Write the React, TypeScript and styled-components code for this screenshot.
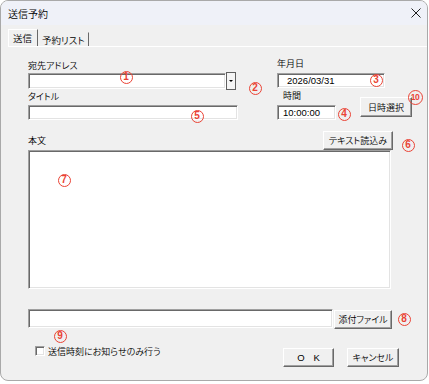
import styled, { createGlobalStyle } from 'styled-components';

const GlobalStyle = createGlobalStyle`
  html, body {
    margin: 0;
    background: #ffffff;
  }
  body {
    font-family: "Noto Sans CJK JP", "Noto Sans", sans-serif;
  }
`;

const jp = `"Noto Sans CJK JP", "Noto Sans", sans-serif`;
const latin = `"Liberation Sans", Arial, sans-serif`;
const mark = '#ea4335';

const sunken = `
  box-sizing: border-box;
  background: #ffffff;
  border-style: solid;
  border-width: 1px;
  border-color: #a0a0a0 #ffffff #ffffff #a0a0a0;
  box-shadow: inset 1px 1px 0 #696969, inset -1px -1px 0 #e3e3e3;
`;

const Styled = {
  Window: styled.div`
    position: relative;
    box-sizing: border-box;
    width: 428px;
    height: 381px;
    border: 1px solid #a9a9a9;
    border-radius: 8px;
    background: #f0f0f0;
    overflow: hidden;
    font-family: ${jp};
    font-size: 9px;
    font-weight: 350;
    font-feature-settings: "palt";
    color: #000000;
  `,
  TitleBar: styled.div`
    display: flex;
    align-items: center;
    justify-content: space-between;
    height: 24px;
    padding: 0 6px 0 7px;
    background: #eff1f8;
    font-size: 10px;
  `,
  TabStrip: styled.div`
    display: flex;
    align-items: flex-end;
    height: 17px;
    margin-top: 4px;
    padding-left: 7px;
  `,
  Tab: styled.div<{ $active?: boolean }>`
    box-sizing: border-box;
    display: flex;
    align-items: center;
    height: ${(p) => (p.$active ? 17 : 14)}px;
    padding: ${(p) => (p.$active ? '0 5px 0 4px' : '0 3px 0 3px')};
    border-top: 1px solid ${(p) => (p.$active ? '#ffffff' : 'transparent')};
    border-left: 1px solid ${(p) => (p.$active ? '#ffffff' : 'transparent')};
    border-right: 1px solid #696969;
    font-size: 9.5px;
    white-space: nowrap;
  `,
  Panel: styled.div`
    margin-left: 7px;
    padding: 13px 0 0 20px;
    border-top: 1px solid #ffffff;
  `,
  TopSection: styled.div`
    display: flex;
    align-items: flex-start;
  `,
  Column: styled.div<{ $width?: number; $left?: number; $top?: number }>`
    display: flex;
    flex-direction: column;
    width: ${(p) => (p.$width ? `${p.$width}px` : 'auto')};
    margin-left: ${(p) => p.$left ?? 0}px;
    margin-top: ${(p) => p.$top ?? 0}px;
  `,
  Label: styled.div<{ $top?: number; $bottom?: number; $indent?: number }>`
    height: 12px;
    line-height: 12px;
    margin-top: ${(p) => p.$top ?? 0}px;
    margin-bottom: ${(p) => p.$bottom ?? 0}px;
    padding-left: ${(p) => p.$indent ?? 0}px;
    white-space: nowrap;
  `,
  ComboRow: styled.div`
    display: flex;
    align-items: center;
    height: 18px;
  `,
  Field: styled.div<{ $w: number; $h: number; $top?: number; $pad?: number }>`
    ${sunken}
    width: ${(p) => p.$w}px;
    height: ${(p) => p.$h}px;
    margin-top: ${(p) => p.$top ?? 0}px;
    padding-left: ${(p) => p.$pad ?? 0}px;
    font-family: ${latin};
    font-weight: 400;
    font-size: 9.5px;
    line-height: 13px;
  `,
  DropButton: styled.div`
    box-sizing: border-box;
    display: flex;
    align-items: center;
    justify-content: center;
    width: 10px;
    height: 18px;
    border: 1px solid #5f5f5f;
    background: #f4f4f4;
    &::after {
      content: '';
      border-left: 2px solid transparent;
      border-right: 2px solid transparent;
      border-top: 2px solid #000000;
    }
  `,
  TimeRow: styled.div`
    display: flex;
    align-items: flex-end;
  `,
  Button: styled.div<{ $w: number; $h: number; $top?: number; $left?: number; $bottom?: number }>`
    box-sizing: border-box;
    display: flex;
    align-items: center;
    justify-content: center;
    width: ${(p) => p.$w}px;
    height: ${(p) => p.$h}px;
    margin: ${(p) => p.$top ?? 0}px 0 ${(p) => p.$bottom ?? 0}px ${(p) => p.$left ?? 0}px;
    background: #f0f0f0;
    border-style: solid;
    border-width: 1px;
    border-color: #ffffff #696969 #696969 #ffffff;
    box-shadow: inset -1px -1px 0 #a0a0a0;
    white-space: nowrap;
    flex-shrink: 0;
  `,
  BodyHeader: styled.div`
    display: flex;
    align-items: flex-end;
    justify-content: space-between;
    width: 365px;
    margin-top: 11px;
  `,
  AttachRow: styled.div`
    display: flex;
    align-items: flex-start;
    margin-top: 20px;
  `,
  BottomRow: styled.div`
    display: flex;
    align-items: flex-start;
    width: 371px;
    margin-top: 17px;
  `,
  CheckGroup: styled.label`
    display: flex;
    align-items: center;
    gap: 3px;
    padding-left: 7px;
    height: 10px;
    white-space: nowrap;
  `,
  CheckBox: styled.span`
    ${sunken}
    display: block;
    width: 10px;
    height: 10px;
  `,
  ButtonGroup: styled.div`
    display: flex;
    gap: 13px;
    margin-left: auto;
    margin-top: 2px;
  `,
  OkText: styled.span`
    display: flex;
    gap: 9px;
    font-family: ${latin};
    font-weight: 400;
    font-size: 9.5px;
  `,
  Badge: styled.span<{ $x: number; $y: number; $size?: number }>`
    position: absolute;
    box-sizing: border-box;
    display: flex;
    align-items: center;
    justify-content: center;
    left: ${(p) => p.$x - (p.$size ?? 13) / 2 - 1}px;
    top: ${(p) => p.$y - (p.$size ?? 13) / 2 - 1}px;
    width: ${(p) => p.$size ?? 13}px;
    height: ${(p) => p.$size ?? 13}px;
    border: 1.2px solid ${mark};
    border-radius: 50%;
    color: ${mark};
    font-family: ${latin};
    font-weight: 700;
    font-size: ${(p) => ((p.$size ?? 13) > 13 ? 8.5 : 10)}px;
    letter-spacing: ${(p) => ((p.$size ?? 13) > 13 ? '-0.6px' : '0')};
    line-height: 1;
  `,
};

const badges: { n: number; x: number; y: number; size?: number }[] = [
  { n: 1, x: 126, y: 77 },
  { n: 2, x: 255, y: 88 },
  { n: 3, x: 376, y: 80 },
  { n: 4, x: 344, y: 114 },
  { n: 5, x: 197, y: 116 },
  { n: 6, x: 408, y: 145 },
  { n: 7, x: 64, y: 180 },
  { n: 8, x: 404, y: 319 },
  { n: 9, x: 60, y: 336 },
  { n: 10, x: 415, y: 97, size: 15 },
];

function CloseIcon() {
  return (
    <svg width="10" height="10" viewBox="0 0 10 10">
      <path d="M0.5 0.5 L9.5 9.5 M9.5 0.5 L0.5 9.5" stroke="#1f1f1f" strokeWidth="1" fill="none" />
    </svg>
  );
}

export default function App() {
  return (
    <>
      <GlobalStyle />
      <Styled.Window>
        <Styled.TitleBar>
          <span>送信予約</span>
          <CloseIcon />
        </Styled.TitleBar>

        <Styled.TabStrip>
          <Styled.Tab $active>送信</Styled.Tab>
          <Styled.Tab>予約リスト</Styled.Tab>
        </Styled.TabStrip>

        <Styled.Panel>
          <Styled.TopSection>
            <Styled.Column $width={210}>
              <Styled.Label>宛先アドレス</Styled.Label>
              <Styled.ComboRow>
                <Styled.Field $w={198} $h={16} />
                <Styled.DropButton />
              </Styled.ComboRow>
              <Styled.Label $top={1}>タイトル</Styled.Label>
              <Styled.Field $w={210} $h={15} $top={2} />
            </Styled.Column>

            <Styled.Column $left={39} $top={-2}>
              <Styled.Label>年月日</Styled.Label>
              <Styled.Field $w={108} $h={15} $top={3} $pad={9}>
                2026/03/31
              </Styled.Field>
              <Styled.TimeRow>
                <Styled.Column>
                  <Styled.Label $top={2} $indent={6}>
                    時間
                  </Styled.Label>
                  <Styled.Field $w={59} $h={15} $top={3} $pad={5}>
                    10:00:00
                  </Styled.Field>
                </Styled.Column>
                <Styled.Button $w={52} $h={20} $left={24} $bottom={3}>
                  日時選択
                </Styled.Button>
              </Styled.TimeRow>
            </Styled.Column>
          </Styled.TopSection>

          <Styled.BodyHeader>
            <Styled.Label $bottom={3}>本文</Styled.Label>
            <Styled.Button $w={70} $h={19}>
              テキスト読込み
            </Styled.Button>
          </Styled.BodyHeader>
          <Styled.Field $w={363} $h={139} />

          <Styled.AttachRow>
            <Styled.Field $w={305} $h={19} />
            <Styled.Button $w={58} $h={19} $top={1} $left={1}>
              添付ファイル
            </Styled.Button>
          </Styled.AttachRow>

          <Styled.BottomRow>
            <Styled.CheckGroup>
              <Styled.CheckBox />
              送信時刻にお知らせのみ行う
            </Styled.CheckGroup>
            <Styled.ButtonGroup>
              <Styled.Button $w={51} $h={19}>
                <Styled.OkText>
                  <span>O</span>
                  <span>K</span>
                </Styled.OkText>
              </Styled.Button>
              <Styled.Button $w={52} $h={19}>
                キャンセル
              </Styled.Button>
            </Styled.ButtonGroup>
          </Styled.BottomRow>
        </Styled.Panel>

        {badges.map((b) => (
          <Styled.Badge key={b.n} $x={b.x} $y={b.y} $size={b.size}>
            {b.n}
          </Styled.Badge>
        ))}
      </Styled.Window>
    </>
  );
}
